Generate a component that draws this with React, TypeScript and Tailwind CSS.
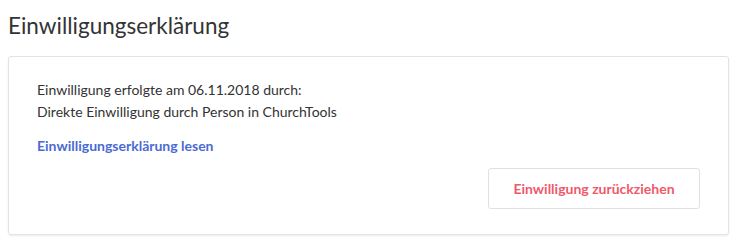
export default function App() {
  return (
    <div className="min-h-screen bg-white font-['Lato','Liberation_Sans',sans-serif] text-[#2c2c2c]">
      <div className="pl-2 pt-[11px]">
        <h1 className="text-[22.5px] leading-[30px] text-[#333]">
          Einwilligungserklärung
        </h1>

        <div className="mt-[15px] w-[721px] h-[179px] rounded-[3px] border border-[#e0e3e8] shadow-[0_1px_2px_rgba(0,0,0,0.08)] pl-[28px] pr-[28px] pt-[22px]">
          <p className="text-[14px] leading-[22px] text-[#333]">
            Einwilligung erfolgte am 06.11.2018 durch:
            <br />
            Direkte Einwilligung durch Person in ChurchTools
          </p>

          <a className="block mt-[12px] text-[14px] leading-[22px] font-bold text-[#4a6bd3]">
            Einwilligungserklärung lesen
          </a>

          <div className="flex justify-end mt-[11px]">
            <button className="w-[212px] h-[41px] rounded-[3px] border border-[#dde1e7] bg-white text-[14px] font-bold text-[#f0596a]">
              Einwilligung zurückziehen
            </button>
          </div>
        </div>
      </div>
    </div>
  );
}
